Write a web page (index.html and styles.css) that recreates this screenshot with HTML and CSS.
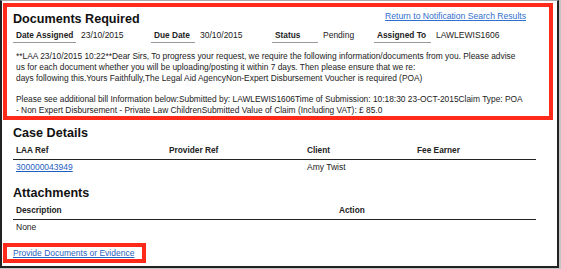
FILE: index.html
```html
<!DOCTYPE html>
<html lang="en">

<head>
    <meta charset="UTF-8">
    <title>Documents Required</title>
    <link rel="stylesheet" href="styles.css">
</head>

<body>
    <div class="window">
        <!-- Notification details (highlighted) -->
        <div class="marked notice">
            <div class="notice-head">
                <h2>Documents Required</h2>
                <a href="#" class="back-link">Return to Notification Search Results</a>
            </div>
            <div class="info-row">
                <div class="label">Date Assigned</div>
                <div class="value">23/10/2015</div>
                <div class="label">Due Date</div>
                <div class="value">30/10/2015</div>
                <div class="label">Status</div>
                <div class="value">Pending</div>
                <div class="label">Assigned To</div>
                <div class="value">LAWLEWIS1606</div>
            </div>
            <p class="message">**LAA 23/10/2015 10:22**Dear Sirs, To progress your request, we require the following information/documents from you. Please advise<br>us for each document whether you will be uploading/posting it within 7 days. Then please ensure that we re:<br>days following this.Yours Faithfully,The Legal Aid AgencyNon-Expert Disbursement Voucher is required (POA)</p>
            <p class="message bill">Please see additional bill Information below:Submitted by: LAWLEWIS1606Time of Submission: 10:18:30 23-OCT-2015Claim Type: POA<br>- Non Expert Disbursement - Private Law ChildrenSubmitted Value of Claim (Including VAT): £ 85.0</p>
        </div>

        <div class="content">
            <h2>Case Details</h2>
            <div class="grid case-grid">
                <div class="th">LAA Ref</div>
                <div class="th">Provider Ref</div>
                <div class="th">Client</div>
                <div class="th">Fee Earner</div>
                <div class="td"><a href="#">300000043949</a></div>
                <div class="td"></div>
                <div class="td">Amy Twist</div>
                <div class="td"></div>
            </div>

            <h2 class="attach-title">Attachments</h2>
            <div class="grid attach-grid">
                <div class="th">Description</div>
                <div class="th">Action</div>
                <div class="td">None</div>
                <div class="td"></div>
            </div>
        </div>

        <div class="marked provide">
            <a href="#">Provide Documents or Evidence</a>
        </div>
    </div>
</body>

</html>
```

FILE: styles.css
```css
/* Global Styles */
body {
    margin: 0;
    background-color: #c4c4c4;
    font-family: "Liberation Sans", Arial, sans-serif;
    font-size: 8.5px;
    line-height: 11px;
    color: #222;
}

a {
    color: #1f5fbf;
}

h2 {
    margin: 0;
    font-size: 12.6px;
    line-height: 16px;
    font-weight: bold;
    color: #111;
}

.window {
    box-sizing: border-box;
    width: 559px;
    height: 268px;
    background-color: #fff;
    border: 2px solid #222;
    border-top: 1px solid #aaa;
}

/* red highlight boxes */
.marked {
    border: 4px solid #ff2a1a;
}

.notice {
    width: 536px;
    margin: 2px 0 0 1px;
    padding: 0 0 0 6px;
}

.notice-head {
    display: flex;
    justify-content: space-between;
    align-items: flex-start;
    padding-top: 4px;
}

.back-link {
    margin-right: 23px;
    font-size: 8.6px;
    color: #2f6fce;
}

.info-row {
    display: grid;
    grid-template-columns: 63px 75px 44px 77px 46px 56px 57px 1fr;
}

.info-row .label {
    padding: 3px 3px 1px;
    font-weight: bold;
    font-size: 8.3px;
    border-bottom: 1px solid #999;
    white-space: nowrap;
}

.info-row .value {
    padding: 3px 3px 1px 5px;
    white-space: nowrap;
}

.message {
    margin: 8px 0 0 3px;
    font-size: 8.4px;
    white-space: nowrap;
}

.message.bill {
    margin-top: 10px;
}

.content {
    padding: 5px 22px 0 11px;
}

.grid {
    display: grid;
}

.case-grid {
    grid-template-columns: 153px 138px 110px 122px;
}

.attach-grid {
    grid-template-columns: 323px 200px;
}

.th {
    padding: 4px 3px 3px;
    font-weight: bold;
    font-size: 8.3px;
    border-bottom: 1px solid #222;
}

.td {
    padding: 2px 3px;
}

.attach-title {
    margin-top: 10px;
}

.provide {
    display: inline-block;
    margin: 8px 0 0 1px;
    padding: 0 8px 0 6px;
    line-height: 12px;
}
```
